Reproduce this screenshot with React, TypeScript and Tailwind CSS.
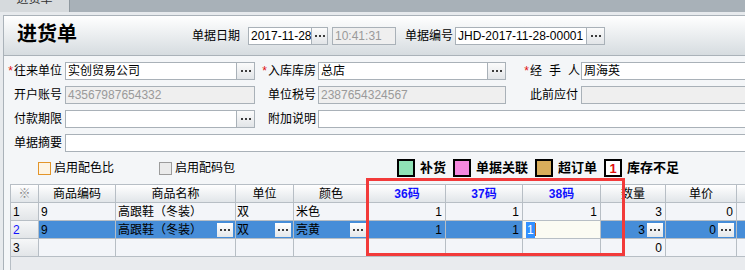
const font = "font-['Liberation_Sans','Noto_Sans_CJK_SC',sans-serif]";

function Dots() {
  return (
    <span className="flex gap-[2px]">
      <i className="block h-[2px] w-[2px] bg-[#3c3c3c]" />
      <i className="block h-[2px] w-[2px] bg-[#3c3c3c]" />
      <i className="block h-[2px] w-[2px] bg-[#3c3c3c]" />
    </span>
  );
}

function PickButton({ width = 'w-[18px]' }: { width?: string }) {
  return (
    <div
      className={`${width} flex h-full shrink-0 items-center justify-center border border-l-0 border-[#a9b1b8] bg-gradient-to-b from-[#fbfbfb] to-[#e2e5e8]`}
    >
      <Dots />
    </div>
  );
}

function Field({
  value = '',
  width,
  disabled,
}: {
  value?: string;
  width: string;
  disabled?: boolean;
}) {
  return (
    <div
      className={`${width} flex h-full items-center overflow-hidden whitespace-nowrap border border-[#a9b1b8] px-[2px] text-[12px] leading-[16px] ${
        disabled ? 'bg-[#efefef] text-[#9a9a9a]' : 'bg-white text-black'
      }`}
    >
      {value}
    </div>
  );
}

function Label({
  text,
  width,
  required,
  pad = 'pr-[3px]',
}: {
  text: React.ReactNode;
  width: string;
  required?: boolean;
  pad?: string;
}) {
  return (
    <div
      className={`${width} ${pad} flex h-full shrink-0 items-center justify-end whitespace-nowrap text-[12px] leading-[16px] text-black`}
    >
      {required && <span className="mr-[1px] text-[12px] text-[#e01010]">*</span>}
      {text}
    </div>
  );
}

function Swatch({ color, label, mark }: { color: string; label: string; mark?: boolean }) {
  return (
    <div className="flex items-center gap-[5px]">
      <div
        className={`${color} flex h-[18px] w-[18px] items-center justify-center border-2 border-black text-[13px] font-bold leading-none text-[#e01010]`}
      >
        {mark ? '1' : null}
      </div>
      <span className="text-[13px] font-bold leading-[16px] text-black">{label}</span>
    </div>
  );
}

const cols =
  'grid-cols-[28px_77px_120px_58px_75px_77px_77px_78px_65px_71px_80px]';
const cell = 'flex h-[18px] items-center border-r border-b border-[#b7bec5] text-[12px] leading-[16px] whitespace-nowrap overflow-hidden';
const head = `${cell} justify-center bg-gradient-to-b from-[#ffffff] to-[#e1e5e9]`;
const rowNo = `${cell} justify-start pl-[2px] bg-gradient-to-b from-[#f6f7f8] to-[#e2e5e8]`;
const plain = `${cell} bg-[#f3f5f9]`;
const sel = `${cell} bg-[#468dd8]`;

function SelBtn() {
  return (
    <div className="ml-auto mr-[2px] flex h-[14px] w-[16px] items-center justify-center bg-gradient-to-b from-[#ffffff] to-[#e4e7ea]">
      <Dots />
    </div>
  );
}

export default function App() {
  return (
    <div className={`relative h-[270px] w-[745px] overflow-hidden bg-[#e7eaed] ${font}`}>
      {/* tab strip */}
      <div className="flex h-[12px] bg-[#a8b1b8]">
        <div className="flex h-full w-[70px] justify-center overflow-hidden border-r border-[#8f989f] bg-[#d6dadd]">
          <span className="-mt-[9px] text-[12px] leading-[16px] text-[#333]">进货单</span>
        </div>
      </div>

      <div className="ml-[3px] mt-[3px] w-[760px] border-l border-t border-[#aab2b9] bg-[#f4f6f8]">
        {/* header */}
        <div className="flex h-[40px] items-center border-b border-[#aab2b9] bg-gradient-to-b from-[#ffffff] to-[#d6dce0]">
          <div className="ml-[13px] -mt-[3px] w-[60px] text-[20px] font-bold leading-[24px] text-black">进货单</div>
          <div className="ml-[115px] text-[12px] leading-[16px]">单据日期</div>
          <div className="ml-[8px] flex h-[18px]">
            <Field value="2017-11-28" width="w-[64px]" />
            <PickButton width="w-[16px]" />
          </div>
          <div className="ml-[4px] h-[18px]">
            <Field value="10:41:31" width="w-[64px]" disabled />
          </div>
          <div className="ml-[9px] text-[12px] leading-[16px]">单据编号</div>
          <div className="ml-[2px] flex h-[18px]">
            <Field value="JHD-2017-11-28-00001" width="w-[132px]" />
            <PickButton />
          </div>
        </div>

        {/* form rows */}
        <div className="flex flex-col gap-[6px] pt-[6px]">
          <div className="flex h-[18px]">
            <Label text="往来单位" width="w-[61px]" required />
            <Field value="实创贸易公司" width="w-[172px]" />
            <PickButton />
            <Label text="入库库房" width="w-[63px]" required pad="pr-[2px]" />
            <Field value="总店" width="w-[170px]" />
            <PickButton />
            <Label
              width="w-[75px]"
              required
              pad="pr-[1px]"
              text={
                <>
                  <span>经</span>
                  <span className="ml-[7px]">手</span>
                  <span className="ml-[7px]">人</span>
                </>
              }
            />
            <Field value="周海英" width="flex-1" />
          </div>

          <div className="flex h-[18px]">
            <Label text="开户账号" width="w-[61px]" />
            <Field value="43567987654332" width="w-[190px]" disabled />
            <Label text="单位税号" width="w-[63px]" pad="pr-[2px]" />
            <Field value="2387654324567" width="w-[188px]" disabled />
            <Label text="此前应付" width="w-[75px]" />
            <Field width="flex-1" disabled />
          </div>

          <div className="flex h-[18px]">
            <Label text="付款期限" width="w-[61px]" />
            <Field width="w-[172px]" />
            <PickButton />
            <Label text="附加说明" width="w-[63px]" pad="pr-[2px]" />
            <Field width="flex-1" />
          </div>

          <div className="flex h-[18px]">
            <Label text="单据摘要" width="w-[61px]" />
            <Field width="flex-1" />
          </div>
        </div>

        {/* options + legend */}
        <div className="flex h-[32px] items-center">
          <div className="ml-[34px] flex items-center gap-[3px]">
            <div className="h-[13px] w-[13px] border border-[#e3952a] bg-[#fdf4e4]" />
            <span className="text-[12px] leading-[16px]">启用配色比</span>
          </div>
          <div className="ml-[45px] flex items-center gap-[3px]">
            <div className="h-[13px] w-[13px] border border-[#9c9c9c] bg-[#ebebeb]" />
            <span className="text-[12px] leading-[16px]">启用配码包</span>
          </div>
          <div className="ml-[162px] flex items-center gap-[7px]">
            <Swatch color="bg-[#8fe3b6]" label="补货" />
            <Swatch color="bg-[#f588df]" label="单据关联" />
            <Swatch color="bg-[#d8ad5b]" label="超订单" />
            <Swatch color="bg-white" label="库存不足" mark />
          </div>
        </div>

        {/* grid */}
        <div className="ml-[6px] h-[90px] border-l border-t border-[#b7bec5] bg-[#e9ebee]">
          <div className={`grid ${cols}`}>
            <div className={`${head} text-[#888]`}>※</div>
            <div className={head}>商品编码</div>
            <div className={head}>商品名称</div>
            <div className={head}>单位</div>
            <div className={head}>颜色</div>
            <div className={`${head} font-bold text-[#1010ff]`}>36码</div>
            <div className={`${head} font-bold text-[#1010ff]`}>37码</div>
            <div className={`${head} font-bold text-[#1010ff]`}>38码</div>
            <div className={head}>数量</div>
            <div className={head}>单价</div>
            <div className={head} />

            <div className={rowNo}>1</div>
            <div className={`${plain} pl-[2px]`}>9</div>
            <div className={`${plain} pl-[2px]`}>高跟鞋（冬装）</div>
            <div className={`${plain} pl-[1px]`}>双</div>
            <div className={`${plain} pl-[2px]`}>米色</div>
            <div className={`${plain} justify-end pr-[3px]`}>1</div>
            <div className={`${plain} justify-end pr-[3px]`}>1</div>
            <div className={`${plain} justify-end pr-[3px]`}>1</div>
            <div className={`${plain} justify-end pr-[3px]`}>3</div>
            <div className={`${plain} justify-end pr-[3px]`}>0</div>
            <div className={plain} />

            <div className={`${rowNo} text-[#1010ff]`}>2</div>
            <div className={`${sel} pl-[2px]`}>9</div>
            <div className={`${sel} pl-[2px]`}>
              高跟鞋（冬装）
              <SelBtn />
            </div>
            <div className={`${sel} pl-[1px]`}>
              双
              <SelBtn />
            </div>
            <div className={`${sel} pl-[2px]`}>
              亮黄
              <SelBtn />
            </div>
            <div className={`${sel} justify-end pr-[3px]`}>1</div>
            <div className={`${sel} justify-end pr-[3px]`}>1</div>
            <div className={`${cell} bg-[#fbfbf3] pl-[3px]`}>
              <span className="bg-[#3390ff] px-[1px] text-white">1</span>
              <span className="h-[13px] w-[1px] bg-[#c0601c]" />
            </div>
            <div className={`${sel} justify-end`}>
              3
              <div className="ml-[2px] mr-[2px] flex h-[14px] w-[16px] items-center justify-center bg-gradient-to-b from-[#ffffff] to-[#e4e7ea]">
                <Dots />
              </div>
            </div>
            <div className={`${sel} justify-end`}>
              0
              <div className="ml-[2px] mr-[2px] flex h-[14px] w-[16px] items-center justify-center bg-gradient-to-b from-[#ffffff] to-[#e4e7ea]">
                <Dots />
              </div>
            </div>
            <div className={sel} />

            <div className={rowNo}>3</div>
            <div className={plain} />
            <div className={plain} />
            <div className={plain} />
            <div className={plain} />
            <div className={plain} />
            <div className={plain} />
            <div className={plain} />
            <div className={`${plain} justify-end pr-[3px]`}>0</div>
            <div className={plain} />
            <div className={plain} />
          </div>
        </div>
      </div>

      {/* red highlight around size columns */}
      <div className="absolute left-[366px] top-[178px] h-[78px] w-[259px] border-[3px] border-[#f23a3a]" />
    </div>
  );
}
